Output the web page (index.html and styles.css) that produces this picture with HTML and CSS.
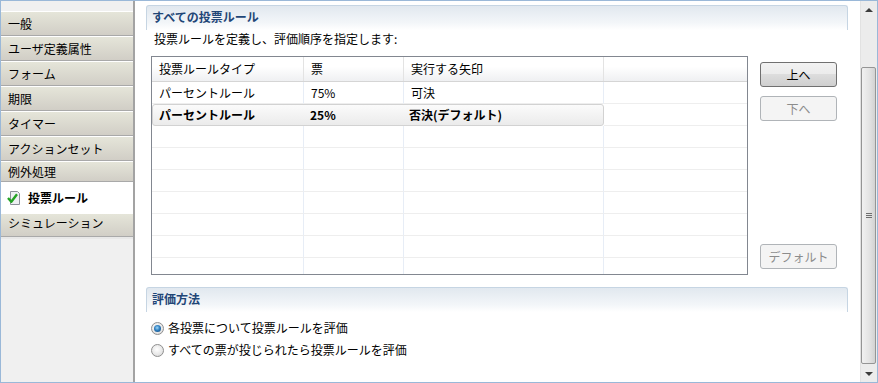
FILE: index.html
```html
<!DOCTYPE html>
<html lang="ja">
<head>
<meta charset="utf-8">
<link rel="stylesheet" href="styles.css">
</head>
<body>
<div class="window">
  <div class="nav">
    <div class="nav-item">一般</div>
    <div class="nav-item">ユーザ定義属性</div>
    <div class="nav-item">フォーム</div>
    <div class="nav-item">期限</div>
    <div class="nav-item">タイマー</div>
    <div class="nav-item">アクションセット</div>
    <div class="nav-item short">例外処理</div>
    <div class="nav-item active">
      <svg class="check" width="14" height="14" viewBox="0 0 14 14">
        <path d="M3.5 0.5 H10.5 L12.5 2.5 V13.5 H3.5 Z" fill="#eef0f3" stroke="#8b9099"/>
        <path d="M1 7 L4.3 10.8 L10 3.2" fill="none" stroke="#23a323" stroke-width="2.4" stroke-linejoin="round"/>
      </svg>
      <span>投票ルール</span>
    </div>
    <div class="nav-item last">シミュレーション</div>
  </div>

  <div class="content">
    <div class="section-head">すべての投票ルール</div>
    <div class="desc">投票ルールを定義し、評価順序を指定します:</div>
    <div class="rules">
      <div class="table">
        <div class="thead">
          <div class="c w1">投票ルールタイプ</div>
          <div class="c w2">票</div>
          <div class="c w3">実行する矢印</div>
          <div class="c w4"></div>
        </div>
        <div class="row">
          <div class="c w1">パーセントルール</div>
          <div class="c w2">75%</div>
          <div class="c w3">可決</div>
          <div class="c w4"></div>
        </div>
        <div class="row">
          <div class="sel">
            <div class="s1">パーセントルール</div>
            <div class="s2">25%</div>
            <div class="s3">否決(デフォルト)</div>
          </div>
          <div class="c w4"></div>
        </div>
        <div class="row"><div class="c w1"></div><div class="c w2"></div><div class="c w3"></div><div class="c w4"></div></div>
        <div class="row"><div class="c w1"></div><div class="c w2"></div><div class="c w3"></div><div class="c w4"></div></div>
        <div class="row"><div class="c w1"></div><div class="c w2"></div><div class="c w3"></div><div class="c w4"></div></div>
        <div class="row"><div class="c w1"></div><div class="c w2"></div><div class="c w3"></div><div class="c w4"></div></div>
        <div class="row"><div class="c w1"></div><div class="c w2"></div><div class="c w3"></div><div class="c w4"></div></div>
        <div class="row"><div class="c w1"></div><div class="c w2"></div><div class="c w3"></div><div class="c w4"></div></div>
        <div class="row"><div class="c w1"></div><div class="c w2"></div><div class="c w3"></div><div class="c w4"></div></div>
      </div>
      <div class="buttons">
        <div class="btn">上へ</div>
        <div class="btn disabled">下へ</div>
        <div class="spacer"></div>
        <div class="btn disabled">デフォルト</div>
      </div>
    </div>

    <div class="section-head second">評価方法</div>
    <div class="options">
      <div class="opt"><span class="radio on"></span><span>各投票について投票ルールを評価</span></div>
      <div class="opt"><span class="radio"></span><span>すべての票が投じられたら投票ルールを評価</span></div>
    </div>
  </div>

  <div class="scrollbar">
    <div class="sb-btn"><span class="tri-up"></span></div>
    <div class="sb-track">
      <div class="thumb"><span class="grip"></span></div>
    </div>
    <div class="sb-btn"><span class="tri-down"></span></div>
  </div>
</div>
</body>
</html>
```

FILE: styles.css
```css
* { box-sizing: border-box; }

body {
  margin: 0;
  font-family: "Noto Sans CJK JP", "Noto Sans", sans-serif;
  font-size: 12px;
  line-height: 16px;
  color: #000;
  background: #fff;
}

.window {
  width: 878px;
  height: 383px;
  border: 1px solid #9ab8d8;
  display: flex;
  overflow: hidden;
  background: #fff;
}

/* ---------- left navigation ---------- */
.nav {
  width: 134px;
  flex: none;
  background: #f0f0f0;
  border-right: 2px solid #a3a3a3;
  padding-top: 10px;
}

.nav-item {
  height: 25px;
  border-top: 1px solid #ffffff;
  border-bottom: 1px solid #a9a9a9;
  background: linear-gradient(#e5e5d9, #d1cec6);
  padding-left: 7px;
  line-height: 23px;
  white-space: nowrap;
}

.nav-item.short {
  height: 21px;
  line-height: 19px;
}

.nav-item.active {
  height: 31px;
  border: none;
  background: #fff;
  display: flex;
  align-items: center;
  gap: 7px;
  padding-left: 6px;
  font-weight: bold;
}

.nav-item.last {
  height: 24px;
  line-height: 18px;
  box-shadow: 0 2px 0 #e8e8e8;
}

.check { flex: none; }

/* ---------- content ---------- */
.content {
  flex: 1;
  min-width: 0;
  background: #fff;
  overflow: hidden;
}

.section-head {
  margin: 4px 12px 0 11px;
  height: 25px;
  border: 1px solid #c6d5e3;
  border-bottom: none;
  border-radius: 3px 3px 0 0;
  background: linear-gradient(#e1e8ef, #f3f6f9 70%, #ffffff);
  padding: 3px 0 0 5px;
  font-weight: bold;
  color: #1f4677;
}

.section-head.second {
  margin-top: 12px;
}

.desc {
  padding: 1px 0 0 19px;
  height: 26px;
}

.rules {
  display: flex;
  align-items: flex-start;
  padding-left: 16px;
}

.table {
  width: 597px;
  height: 219px;
  flex: none;
  border: 1px solid #828790;
  overflow: hidden;
}

.thead {
  display: flex;
  height: 25px;
  border-bottom: 1px solid #d5d5d5;
  background: linear-gradient(#ffffff, #ffffff 40%, #eff0f2);
}

.thead .c {
  border-right: 1px solid #e3e3e3;
  line-height: 24px;
  padding-left: 7px;
}

.row {
  display: flex;
  height: 22px;
}

.row .c {
  border-right: 1px solid #e7edf6;
  border-bottom: 1px solid #eeeeee;
  line-height: 21px;
  padding-left: 7px;
}

.w1 { width: 152px; }
.w2 { width: 100px; }
.w3 { width: 200px; }
.w4 { width: 143px; border-right: none !important; }

.sel {
  display: flex;
  width: 452px;
  height: 22px;
  border: 1px solid #d2d2d2;
  border-radius: 3px;
  background: linear-gradient(#fbfbfb, #ebebeb);
  font-weight: bold;
  line-height: 20px;
}

.s1 { width: 151px; padding-left: 6px; }
.s2 { width: 100px; padding-left: 6px; }
.s3 { flex: 1; padding-left: 5px; }

.buttons {
  display: flex;
  flex-direction: column;
  margin-left: 12px;
  padding-top: 6px;
}

.btn {
  width: 77px;
  height: 25px;
  border: 1px solid #707070;
  border-radius: 3px;
  background: linear-gradient(#f2f2f2 0%, #ebebeb 50%, #dddddd 50%, #cfcfcf 100%);
  text-align: center;
  line-height: 23px;
  margin-bottom: 9px;
}

.btn:last-child {
  margin-bottom: 0;
}

.btn.disabled {
  border-color: #b0b4b8;
  background: #f4f4f4;
  color: #8c8c8c;
}

.spacer {
  height: 114px;
}

.options {
  padding: 5px 0 0 16px;
}

.opt {
  display: flex;
  align-items: center;
  gap: 4px;
  height: 22px;
}

.radio {
  width: 13px;
  height: 13px;
  flex: none;
  border-radius: 50%;
  border: 1px solid #8f8f8f;
  background: radial-gradient(circle at 45% 40%, #ffffff 0%, #e6e6e6 60%, #cfcfcf 100%);
  position: relative;
}

.radio.on::after {
  content: "";
  position: absolute;
  left: 2px;
  top: 2px;
  width: 7px;
  height: 7px;
  border-radius: 50%;
  background: radial-gradient(circle at 45% 40%, #9fd8f8 0%, #2f7fc0 45%, #0b3e72 100%);
}

/* ---------- scrollbar ---------- */
.scrollbar {
  width: 17px;
  flex: none;
  display: flex;
  flex-direction: column;
  background: #ececec;
  border-left: 1px solid #e2e2e2;
}

.sb-btn {
  height: 17px;
  flex: none;
  display: flex;
  align-items: center;
  justify-content: center;
}

.tri-up {
  width: 0;
  height: 0;
  border-left: 4px solid transparent;
  border-right: 4px solid transparent;
  border-bottom: 4px solid #3c3c3c;
}

.tri-down {
  width: 0;
  height: 0;
  border-left: 4px solid transparent;
  border-right: 4px solid transparent;
  border-top: 4px solid #3c3c3c;
}

.sb-track {
  flex: 1;
  display: flex;
  flex-direction: column;
  padding: 49px 0 1px 0;
}

.thumb {
  flex: 1;
  margin: 0 1px 0 0;
  border: 1px solid #959595;
  border-radius: 2px;
  background: linear-gradient(90deg, #f1f1f1, #e4e4e4 55%, #d2d2d2);
  display: flex;
  align-items: center;
  justify-content: center;
}

.grip {
  width: 6px;
  height: 5px;
  background: repeating-linear-gradient(#6e6e6e 0 1px, transparent 1px 2px);
}
```
